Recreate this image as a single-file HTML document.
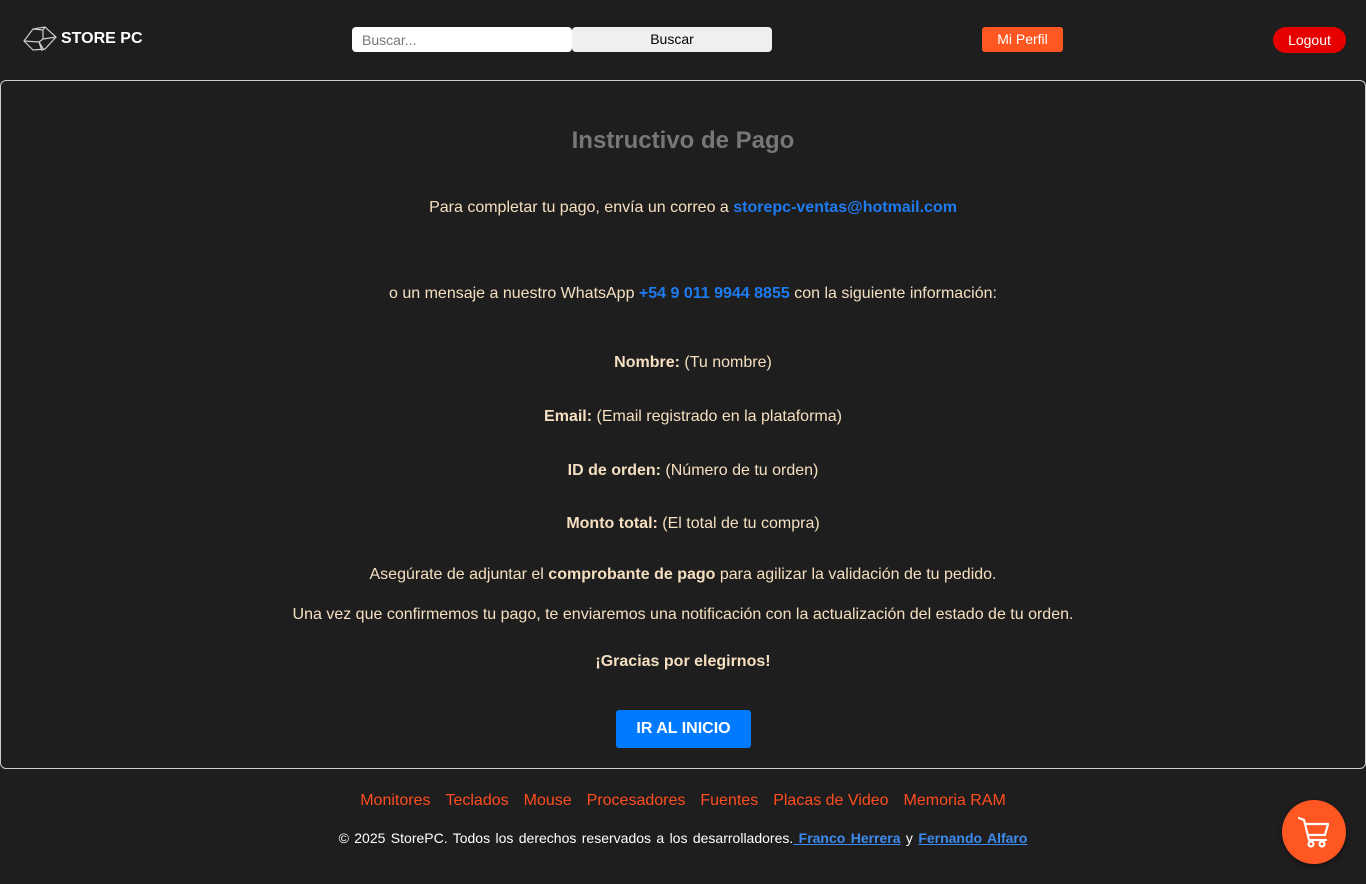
<!DOCTYPE html>
<html><head><meta charset="utf-8"><style>
*{box-sizing:border-box;margin:0;padding:0}
body{width:1366px;height:884px;background:#1e1e1e;font-family:"Liberation Sans",sans-serif;position:relative;overflow:hidden;color:#f5dfc0}
.hdr{position:absolute;top:0;left:0;width:1366px;height:80px}
.logo{position:absolute;left:23px;top:26px;display:flex;align-items:center;color:#fff;font-weight:bold;font-size:16px}
.logo svg{margin-right:4px}
.search{position:absolute;left:352px;top:27px;width:220px;height:25px;background:#fff;border-radius:4px;font-size:14px;color:#777;padding:5px 10px}
.sbtn{position:absolute;left:572px;top:27px;width:200px;height:25px;background:#efefef;border-radius:4px;font-size:14px;color:#000;text-align:center;line-height:25px}
.perfil{position:absolute;left:982px;top:27px;width:81px;height:25px;background:#ff5722;border-radius:3px;color:#fff;font-size:14px;text-align:center;line-height:25px}
.logout{position:absolute;left:1273px;top:27px;width:73px;height:26px;background:#e60000;border-radius:13px;color:#fff;font-size:14px;text-align:center;line-height:26px}
.card{position:absolute;left:0;top:80px;width:1366px;height:689px;border:1px solid #ccc;border-radius:6px;background:#1e1e1e;text-align:center;font-size:16px}
.card p{position:absolute;left:0;width:100%}
h1{position:absolute;top:46px;width:100%;font-size:24px;color:#777;font-weight:bold}
a.b{color:#1e7cf2;font-weight:bold;text-decoration:none}
b{color:#f5dfc0}
.btn{position:absolute;left:615px;top:629px;width:135px;height:38px;background:#007bff;color:#fff;font-weight:bold;font-size:16px;line-height:38px;border-radius:3px}
.links{position:absolute;top:792px;width:100%;text-align:center;font-size:16px;color:#ff4d1f}
.links span{margin:0 7.5px}
.copy{position:absolute;top:830px;width:100%;text-align:center;font-size:14px;color:#fff;word-spacing:1.5px}
.copy a{color:#3d8bef;font-weight:bold;text-decoration:underline}
.cart{position:absolute;left:1282px;top:800px;width:64px;height:64px;border-radius:50%;background:#ff5722;box-shadow:0 2px 6px rgba(0,0,0,.4)}
</style></head><body>
<div class="hdr">
<div class="logo"><svg width="34" height="26" viewBox="0 0 34 26" fill="none" stroke="#ccc" stroke-width="1.2"><path d="M1 15 L10 3 L22 1 L33 11 L22 23 L10 24 Z"/><path d="M10 3 L20 4 L22 1 M20 4 L20 13 L33 11 M20 13 L16 16 L1 15 M16 16 L19 25 M16 16 L21 24"/></svg>STORE PC</div>
<div class="search">Buscar...</div>
<div class="sbtn">Buscar</div>
<div class="perfil">Mi Perfil</div>
<div class="logout">Logout</div>
</div>
<div class="card">
<h1>Instructivo de Pago</h1>
<p style="top:118px;padding-left:20px">Para completar tu pago, envía un correo a <a class="b">storepc-ventas@hotmail.com</a></p>
<p style="top:204px;padding-left:20px">o un mensaje a nuestro WhatsApp <a class="b">+54 9 011 9944 8855</a> con la siguiente información:</p>
<p style="top:273px;padding-left:20px"><b>Nombre:</b> (Tu nombre)</p>
<p style="top:327px;padding-left:20px"><b>Email:</b> (Email registrado en la plataforma)</p>
<p style="top:381px;padding-left:20px"><b>ID de orden:</b> (Número de tu orden)</p>
<p style="top:434px;padding-left:20px"><b>Monto total:</b> (El total de tu compra)</p>
<p style="top:485px">Asegúrate de adjuntar el <b>comprobante de pago</b> para agilizar la validación de tu pedido.</p>
<p style="top:525px">Una vez que confirmemos tu pago, te enviaremos una notificación con la actualización del estado de tu orden.</p>
<p style="top:572px"><b>¡Gracias por elegirnos!</b></p>
<div class="btn">IR AL INICIO</div>
</div>
<div class="links"><span>Monitores</span><span>Teclados</span><span>Mouse</span><span>Procesadores</span><span>Fuentes</span><span>Placas de Video</span><span>Memoria RAM</span></div>
<div class="copy">© 2025 StorePC. Todos los derechos reservados a los desarrolladores.<a> Franco Herrera</a> y <a>Fernando Alfaro</a></div>
<div class="cart"><svg width="64" height="64" viewBox="0 0 64 64" fill="none" stroke="#fff" stroke-width="2.2" stroke-linejoin="round" stroke-linecap="round"><path d="M17 18 L22 20 L27 40 L44 40 M23 24 L46 24 L43 35 L26 35"/><circle cx="29" cy="44" r="2.5"/><circle cx="40" cy="44" r="2.5"/></svg></div>
</body></html>
